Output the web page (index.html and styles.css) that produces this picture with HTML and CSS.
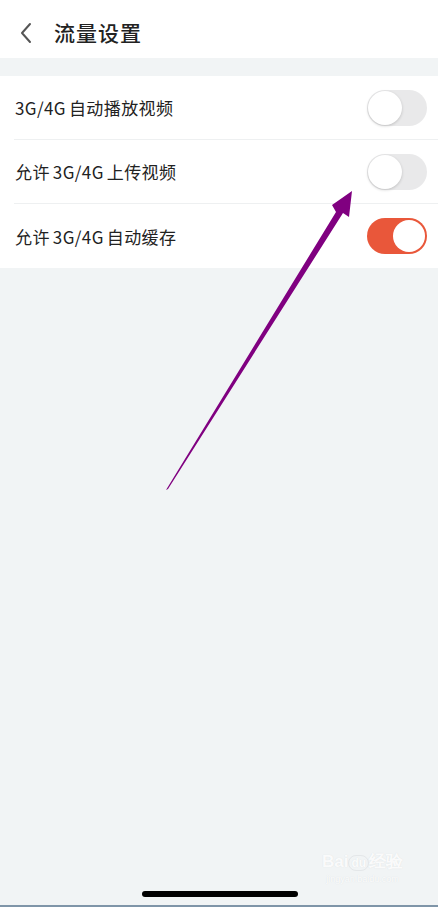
FILE: index.html
```html
<!DOCTYPE html>
<html lang="zh">
<head>
<meta charset="utf-8">
<link rel="stylesheet" href="styles.css">
</head>
<body>
<div class="page">
  <header class="header">
    <svg class="back" width="14" height="22" viewBox="0 0 14 22"><path d="M11 2 L3 11 L11 20" fill="none" stroke="#555" stroke-width="2" stroke-linecap="round" stroke-linejoin="round"/></svg>
    <h1 class="title">流量设置</h1>
  </header>
  <div class="gap"></div>
  <ul class="list">
    <li class="row"><span class="label">3G/4G<span class="sp"></span>自动播放视频</span><span class="switch"><span class="knob"></span></span></li>
    <li class="row"><span class="label">允许<span class="sp"></span>3G/4G<span class="sp"></span>上传视频</span><span class="switch"><span class="knob"></span></span></li>
    <li class="row"><span class="label">允许<span class="sp"></span>3G/4G<span class="sp"></span>自动缓存</span><span class="switch on"><span class="knob"></span></span></li>
  </ul>
  <div class="rest"></div>
  <div class="home-bar"></div>
  <div class="watermark"><div class="wm-top">Bai<span class="paw">du</span>经验</div><div class="wm-url">jingyan.baidu.com</div></div>
  <svg class="arrow" width="438" height="907" viewBox="0 0 438 907">
    <polygon points="166,490 336,212 332,205 352,191 349,217 343,213 168,489" fill="#800080"/>
  </svg>
</div>
</body>
</html>
```
FILE: styles.css
```css
* { box-sizing: border-box; margin: 0; padding: 0; }
html, body { width: 438px; height: 907px; overflow: hidden; }
body { font-family: "Noto Sans CJK SC", "Noto Sans", sans-serif; background: #f1f4f5; color: #222; }
.page { position: relative; width: 438px; height: 907px; display: flex; flex-direction: column; }
.header { height: 58px; background: #fff; display: flex; align-items: center; padding-left: 19px; padding-top: 7px; }
.back { margin-right: 21px; }
.title { font-size: 21px; font-weight: 500; color: #222; letter-spacing: 1px; line-height: 1; }
.gap { height: 18px; }
.list { list-style: none; background: #fff; padding-left: 14px; }
.row { height: 64px; display: flex; align-items: center; justify-content: space-between; padding-right: 11px; border-bottom: 1px solid #eef0f1; }
.row:last-child { border-bottom: none; }
.label { font-size: 17px; color: #222; padding-left: 1px; letter-spacing: 0.4px; display: flex; align-items: center; }
.sp { display: inline-block; width: 3px; }
.switch { width: 60px; height: 36px; border-radius: 18px; background: #e9e9ea; position: relative; }
.knob { position: absolute; left: 1px; top: 1px; width: 34px; height: 34px; border-radius: 50%; background: #fff; box-shadow: 0 1px 3px rgba(0,0,0,0.18); }
.switch.on { background: #e9573a; }
.switch.on .knob { left: auto; right: 2px; top: 2px; width: 32px; height: 32px; box-shadow: none; }
.rest { flex: 1; }
.home-bar { position: absolute; left: 142px; top: 891px; width: 156px; height: 6px; border-radius: 3px; background: #000; }
.watermark { position: absolute; left: 322px; top: 852px; color: rgba(255,255,255,0.9); text-align: center; font-family: "Liberation Sans", sans-serif; }
.wm-top { font-size: 17px; font-weight: bold; line-height: 20px; text-shadow: 0 0 1px #d8dcde; }
.paw { font-size: 12px; border-radius: 8px; border: 1px solid #e4e7e9; padding: 0 2px; }
.wm-url { font-size: 9px; line-height: 12px; text-shadow: 0 0 1px #d8dcde; }
.arrow { position: absolute; left: 0; top: 0; pointer-events: none; }
body::after { content: ""; position: absolute; left: 0; top: 905px; width: 438px; height: 2px; background: #7f95a8; }
```
